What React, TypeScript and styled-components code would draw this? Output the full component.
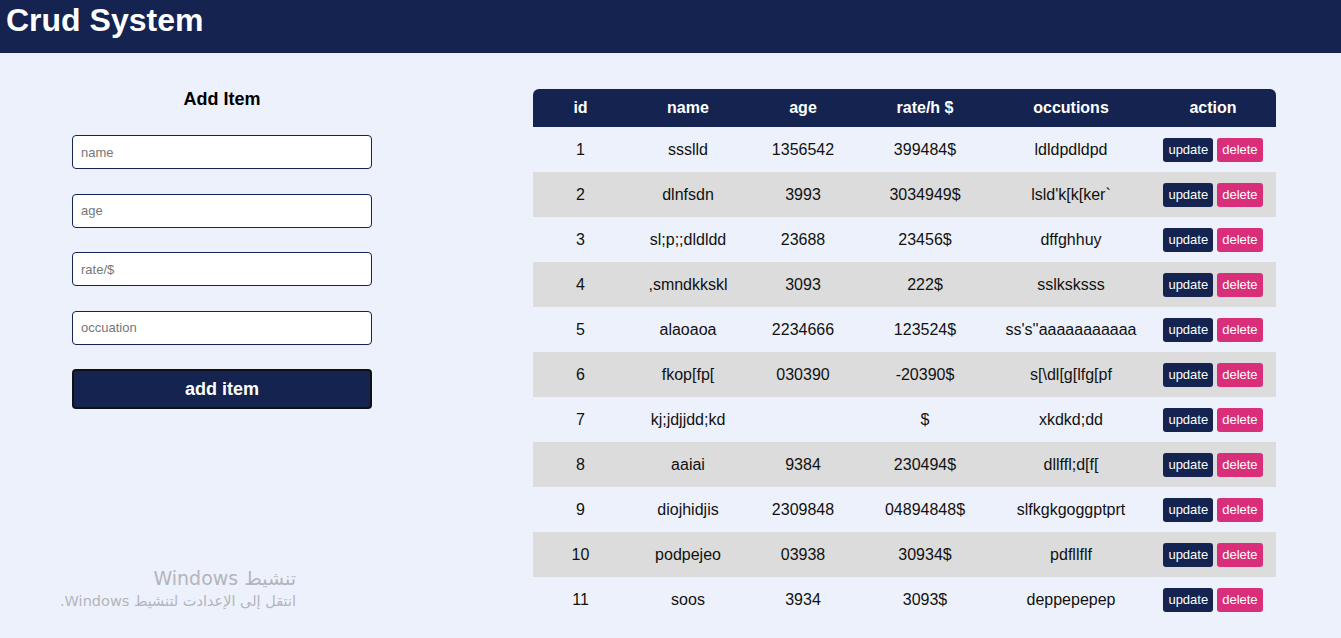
import styled, { createGlobalStyle } from "styled-components";

type Item = {
  id: number;
  name: string;
  age: string;
  rate: string;
  occupation: string;
};

const items: Item[] = [
  { id: 1, name: "ssslld", age: "1356542", rate: "399484$", occupation: "ldldpdldpd" },
  { id: 2, name: "dlnfsdn", age: "3993", rate: "3034949$", occupation: "lsld'k[k[ker`" },
  { id: 3, name: "sl;p;;dldldd", age: "23688", rate: "23456$", occupation: "dffghhuy" },
  { id: 4, name: ",smndkkskl", age: "3093", rate: "222$", occupation: "sslksksss" },
  { id: 5, name: "alaoaoa", age: "2234666", rate: "123524$", occupation: "ss's''aaaaaaaaaaa" },
  { id: 6, name: "fkop[fp[", age: "030390", rate: "-20390$", occupation: "s[\\dl[g[lfg[pf" },
  { id: 7, name: "kj;jdjjdd;kd", age: "", rate: "$", occupation: "xkdkd;dd" },
  { id: 8, name: "aaiai", age: "9384", rate: "230494$", occupation: "dllffl;d[f[" },
  { id: 9, name: "diojhidjis", age: "2309848", rate: "04894848$", occupation: "slfkgkgoggptprt" },
  { id: 10, name: "podpejeo", age: "03938", rate: "30934$", occupation: "pdfllflf" },
  { id: 11, name: "soos", age: "3934", rate: "3093$", occupation: "deppepepep" },
];

const columns = [
  { label: "id", width: 95 },
  { label: "name", width: 120 },
  { label: "age", width: 110 },
  { label: "rate/h $", width: 134 },
  { label: "occutions", width: 158 },
  { label: "action", width: 126 },
];

const GlobalStyle = createGlobalStyle`
  * {
    box-sizing: border-box;
  }
  body {
    margin: 0;
    background: #edf1fc;
    font-family: "Liberation Sans", Arial, sans-serif;
    color: #111;
  }
`;

export default function App() {
  return (
    <>
      <GlobalStyle />
      <Page>
        <Header>
          <Title>Crud System</Title>
        </Header>
        <Main>
          <FormPanel>
            <Form onSubmit={(e) => e.preventDefault()}>
              <FormTitle>Add Item</FormTitle>
              <Input placeholder="name" />
              <Input placeholder="age" />
              <Input placeholder="rate/$" />
              <Input placeholder="occuation" />
              <SubmitButton type="submit">add item</SubmitButton>
            </Form>
          </FormPanel>
          <TablePanel>
            <Table>
              <colgroup>
                {columns.map((c) => (
                  <col key={c.label} style={{ width: c.width }} />
                ))}
              </colgroup>
              <thead>
                <tr>
                  {columns.map((c) => (
                    <HeadCell key={c.label}>{c.label}</HeadCell>
                  ))}
                </tr>
              </thead>
              <tbody>
                {items.map((item, index) => (
                  <Row key={item.id} $striped={index % 2 === 1}>
                    <Cell>{item.id}</Cell>
                    <Cell>{item.name}</Cell>
                    <Cell>{item.age}</Cell>
                    <Cell>{item.rate}</Cell>
                    <Cell>{item.occupation}</Cell>
                    <Cell>
                      <Actions>
                        <ActionButton $variant="update">update</ActionButton>
                        <ActionButton $variant="delete">delete</ActionButton>
                      </Actions>
                    </Cell>
                  </Row>
                ))}
              </tbody>
            </Table>
          </TablePanel>
        </Main>
        <Watermark>
          <WatermarkTitle>تنشيط Windows</WatermarkTitle>
          <WatermarkText>انتقل إلى الإعدادت لتنشيط Windows.</WatermarkText>
        </Watermark>
      </Page>
    </>
  );
}

const Page = styled.div`
  position: relative;
  min-height: 638px;
`;

const Header = styled.header`
  height: 53px;
  background: #14234f;
  padding-left: 6px;
`;

const Title = styled.h1`
  margin: 0;
  font-size: 32px;
  line-height: 40px;
  font-weight: 700;
  color: #fff;
`;

const Main = styled.main`
  display: flex;
  align-items: flex-start;
  padding-top: 36px;
`;

const FormPanel = styled.section`
  width: 444px;
  display: flex;
  justify-content: center;
`;

const Form = styled.form`
  width: 300px;
  display: flex;
  flex-direction: column;
  gap: 24.5px;
`;

const FormTitle = styled.h2`
  margin: 0 0 0.5px;
  font-size: 18px;
  line-height: 21px;
  font-weight: 700;
  text-align: center;
  color: #000;
`;

const Input = styled.input`
  height: 34px;
  width: 100%;
  padding: 0 8px;
  border: 1px solid #14234f;
  border-radius: 4px;
  background: #fff;
  font-family: "Liberation Sans", Arial, sans-serif;
  font-size: 13px;
  outline: none;

  &::placeholder {
    color: #767676;
  }
`;

const SubmitButton = styled.button`
  height: 40px;
  width: 100%;
  border: 2px solid #111;
  border-radius: 4px;
  background: #14234f;
  color: #fff;
  font-family: "Liberation Sans", Arial, sans-serif;
  font-size: 18px;
  font-weight: 700;
  cursor: pointer;
`;

const TablePanel = styled.section`
  padding-left: 89px;
`;

const Table = styled.table`
  width: 743px;
  table-layout: fixed;
  border-collapse: separate;
  border-spacing: 0;
  text-align: center;
  font-size: 16px;
`;

const HeadCell = styled.th`
  height: 38px;
  padding: 0;
  background: #14234f;
  color: #fff;
  font-weight: 700;
  font-size: 16px;

  &:first-child {
    border-top-left-radius: 6px;
  }
  &:last-child {
    border-top-right-radius: 6px;
  }
`;

const Row = styled.tr<{ $striped: boolean }>`
  background: ${({ $striped }) => ($striped ? "#dcdcdc" : "transparent")};
`;

const Cell = styled.td`
  height: 45px;
  padding: 0;
  color: #111;
`;

const Actions = styled.div`
  display: flex;
  justify-content: center;
  gap: 4px;
`;

const ActionButton = styled.button<{ $variant: "update" | "delete" }>`
  height: 24px;
  padding: 0 5px;
  border: none;
  border-radius: 3px;
  background: ${({ $variant }) => ($variant === "update" ? "#14234f" : "#d92e79")};
  color: #fff;
  font-family: "Liberation Sans", Arial, sans-serif;
  font-size: 13px;
  cursor: pointer;
`;

const Watermark = styled.div`
  position: absolute;
  left: 40px;
  top: 565px;
  width: 256px;
  direction: rtl;
  text-align: right;
  font-family: "DejaVu Sans", "Noto Sans", sans-serif;
  color: #b3b5bb;
  pointer-events: none;
`;

const WatermarkTitle = styled.div`
  font-size: 19px;
  line-height: 26px;
`;

const WatermarkText = styled.div`
  font-size: 14.5px;
  line-height: 20px;
  white-space: nowrap;
`;
